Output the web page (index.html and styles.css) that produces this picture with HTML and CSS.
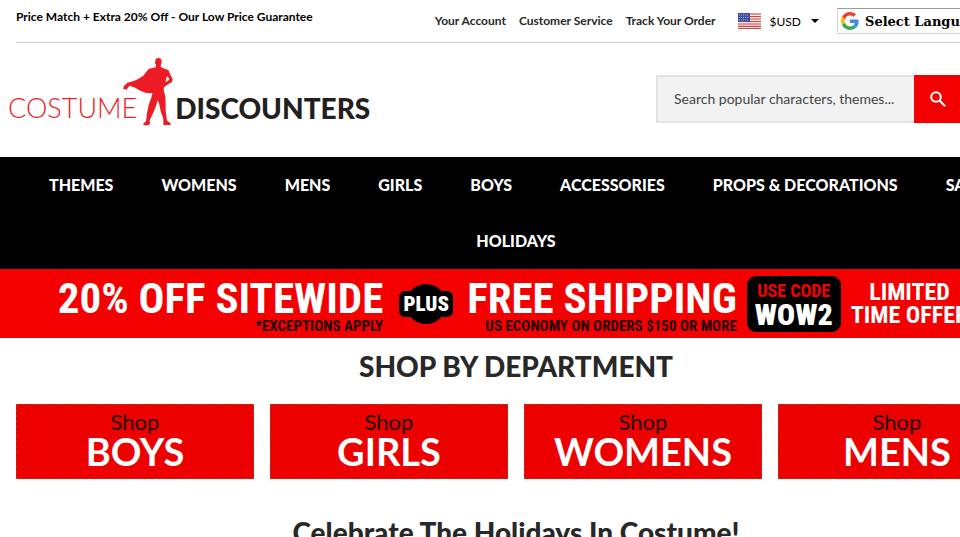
FILE: index.html
```html
<!DOCTYPE html>
<html lang="en">
<head>
<meta charset="utf-8">
<title>Costume Discounters</title>
<link rel="stylesheet" href="styles.css">
</head>
<body>
<header>
  <div class="topbar">
    <p class="promise">Price Match + Extra 20% Off - Our Low Price Guarantee</p>
    <div class="account">
      <a href="#">Your Account</a>
      <a href="#">Customer Service</a>
      <a href="#">Track Your Order</a>
    </div>
    <button class="currency" type="button">
      <svg class="flag" viewBox="0 0 23 16" aria-hidden="true">
        <rect width="23" height="16" fill="#f3e9e9"/>
        <path d="M0 1h23M0 3.500h23M0 6h23M0 8.500h23M0 11h23M0 13.300h23M0 15.500h23" stroke="#d5433f" stroke-width="1.200"/>
        <rect width="12" height="9" fill="#3f4e9c"/>
        <path d="M1 2h10M1 4.500h10M1 7h10" stroke="#a9b2da" stroke-dasharray="1 1"/>
      </svg>
      <span>$USD</span>
      <svg class="caret" viewBox="0 0 8 4" aria-hidden="true"><path d="M0 0h8L4 4z"/></svg>
    </button>
    <button class="language" type="button">
      <svg class="google" viewBox="0 0 48 48" aria-hidden="true">
        <path fill="#EA4335" d="M24 9.500c3.540 0 6.710 1.220 9.210 3.600l6.850-6.850C35.900 2.380 30.470 0 24 0 14.620 0 6.510 5.380 2.560 13.220l7.980 6.190C12.430 13.720 17.740 9.500 24 9.500z"/>
        <path fill="#4285F4" d="M46.980 24.550c0-1.570-.15-3.090-.38-4.550H24v9.020h12.940c-.58 2.960-2.260 5.480-4.780 7.180l7.730 6c4.510-4.180 7.090-10.360 7.090-17.650z"/>
        <path fill="#FBBC05" d="M10.530 28.590c-.48-1.450-.76-2.990-.76-4.590s.27-3.140.76-4.590l-7.980-6.190C.92 16.460 0 20.120 0 24s.92 7.540 2.560 10.780z"/>
        <path fill="#34A853" d="M24 48c6.480 0 11.930-2.130 15.890-5.810l-7.730-6c-2.150 1.450-4.920 2.300-8.160 2.300-6.260 0-11.570-4.220-13.470-9.910l-7.980 6.190C6.510 42.620 14.620 48 24 48z"/>
      </svg>
      <span>Select Language</span>
    </button>
  </div>

  <div class="masthead">
    <a class="logo" href="#" aria-label="Costume Discounters">
      <span class="logo-thin">COSTUME</span>
      <svg class="hero" viewBox="42 25 150 204" aria-hidden="true">
        <path fill-rule="evenodd" d="M140 28Q148 22 157 28L158 40 155 47 156 53 167 57 178 61 183 73 191 88 189 97 174 106 165 113 164 120 169 142 170 162 170 184 174 213 185 221 184 226 163 226 163 208 155 184 150 161 146 152 141 169 132 191 122 212 123 223 118 227 103 227 104 221 111 215 114 190 119 166 128 141 130 130Q116 133 103 127 90 122 79 114 70 111 62 108L52 120 42 117Q44 107 55 99L74 94Q91 87 103 78 112 65 120 57L140 53 141 47 138 41zM174 80L169 98 180 91 181 87z"/>
      </svg>
      <span class="logo-bold">DISCOUNTERS</span>
    </a>
    <form class="search">
      <input type="text" aria-label="Search" placeholder="Search popular characters, themes...">
      <button type="button" aria-label="Search">
        <svg viewBox="0 0 16 16" aria-hidden="true"><circle cx="6" cy="6" r="4.800"/><path d="M9.500 9.500L15.200 15.200"/></svg>
      </button>
    </form>
  </div>

  <nav class="menu">
    <a href="#">THEMES</a>
    <a href="#">WOMENS</a>
    <a href="#">MENS</a>
    <a href="#">GIRLS</a>
    <a href="#">BOYS</a>
    <a href="#">ACCESSORIES</a>
    <a href="#">PROPS &amp; DECORATIONS</a>
    <a href="#">SALE</a>
    <a href="#">HOLIDAYS</a>
  </nav>
</header>

<main>
  <a class="banner" href="#">
    <span class="offer"><strong>20% OFF SITEWIDE</strong><small>*EXCEPTIONS APPLY</small></span>
    <span class="plus">
      <svg viewBox="0 0 54 40" aria-hidden="true"><circle cx="27" cy="20" r="20"/><rect y="7" width="54" height="26" rx="6"/></svg>
      <b>PLUS</b>
    </span>
    <span class="offer"><strong>FREE SHIPPING</strong><small>US ECONOMY ON ORDERS $150 OR MORE</small></span>
    <span class="code"><span>USE CODE</span><b>WOW2</b></span>
    <span class="limited"><span>LIMITED</span><span>TIME OFFER</span></span>
  </a>

  <h1>SHOP BY DEPARTMENT</h1>
  <div class="departments">
    <a href="#"><span>Shop</span><b>BOYS</b></a>
    <a href="#"><span>Shop</span><b>GIRLS</b></a>
    <a href="#"><span>Shop</span><b>WOMENS</b></a>
    <a href="#"><span>Shop</span><b>MENS</b></a>
  </div>
  <h2>Celebrate The Holidays In Costume!</h2>
</main>
</body>
</html>
```
FILE: styles.css
```css
* { box-sizing: border-box; }

html { overflow: hidden; }

body {
  margin: 0;
  min-width: 1032px;
  background: #fff;
  color: #282828;
  font-family: Lato, "Liberation Sans", sans-serif;
  font-size: 12px;
}

a { color: inherit; text-decoration: none; }
button { margin: 0; padding: 0; border: 0; background: none; color: #000; font: inherit; }
svg { display: block; }

.topbar {
  display: flex;
  align-items: center;
  height: 43px;
  margin: 0 16px;
  border-bottom: 1px solid #ccc;
}
.promise {
  align-self: flex-start;
  margin: 8px auto 0 0;
  color: #000;
  font-weight: 700;
  line-height: 18px;
}
.account { display: flex; gap: 13px; font-weight: 700; line-height: 18px; }
.currency { display: flex; align-items: center; margin-left: 22px; }
.flag { width: 23px; height: 16px; margin-right: 9px; }
.caret { width: 8px; height: 4px; margin-left: 10px; }
.language {
  display: flex;
  align-items: center;
  gap: 6px;
  width: 179px;
  height: 26px;
  margin-left: 18px;
  padding-left: 3px;
  border: 1px solid #d5d5d5;
  border-top-color: #9b9b9b;
  font: 700 13px "DejaVu Serif", serif;
}
.google { width: 18px; height: 18px; }

.masthead {
  display: flex;
  justify-content: space-between;
  align-items: flex-start;
  height: 114px;
  padding: 15px 70px 0 8px;
}
.logo { display: flex; align-items: flex-end; line-height: 36px; }
.logo-thin { color: #ed1c24; font-size: 27px; font-weight: 300; }
.logo-bold { color: #231f20; font-size: 28px; font-weight: 900; }
.hero { width: 50px; height: 68px; margin: 0 2px 0 -14px; fill: #ed1c24; }

.search { display: flex; margin-top: 17px; }
.search input {
  width: 258px;
  height: 48px;
  padding: 0 0 2px 16px;
  border: 2px solid #e3e3e3;
  border-right: 0;
  border-radius: 0;
  background: #f2f2f2;
  color: #444;
  font: 14px Lato, sans-serif;
  appearance: none;
}
.search input::placeholder { color: #444; }
.search button {
  display: grid;
  place-items: center;
  width: 48px;
  height: 48px;
  background: #f50000;
}
.search svg { width: 16px; height: 16px; fill: none; stroke: #fff; stroke-width: 2; }

.menu {
  display: flex;
  flex-wrap: wrap;
  justify-content: center;
  background: #000;
  color: #fff;
  font-size: 16px;
  font-weight: 900;
  line-height: 56px;
}
.menu a { padding: 0 24px; }

.banner {
  display: flex;
  align-items: center;
  justify-content: center;
  height: 69px;
  padding-right: 6px;
  background: #f50000;
  color: #fff;
  font-family: "Roboto Condensed", Roboto, "Liberation Sans", sans-serif;
  font-weight: 700;
  white-space: nowrap;
}
.offer { display: flex; flex-direction: column; align-items: flex-end; padding-top: 2px; }
.offer strong { font-size: 43px; line-height: 42px; font-weight: 700; }
.offer small { color: #200; font-size: 15px; line-height: 14px; }
.plus { display: grid; place-items: center; margin: 0 14px 0 16px; }
.plus > * { grid-area: 1 / 1; }
.plus svg { width: 54px; height: 40px; }
.plus b { font-size: 21px; }
.code {
  display: flex;
  flex-direction: column;
  align-items: center;
  width: 94px;
  height: 56px;
  margin: 0 10px;
  padding-top: 4px;
  border-radius: 9px;
  background: #000;
}
.code span { color: #f50000; font-size: 18px; line-height: 22px; }
.code b { font-size: 30px; line-height: 26px; }
.limited { display: flex; flex-direction: column; align-items: center; font-size: 24px; line-height: 23px; }

h1, h2 { margin: 0; text-align: center; font-size: 28px; font-weight: 900; line-height: 36px; }
h1 { padding: 10px 0 20px; }
.departments {
  display: grid;
  grid-template-columns: repeat(4, 1fr);
  gap: 16px;
  padding: 0 16px;
}
.departments a {
  display: flex;
  flex-direction: column;
  align-items: center;
  height: 75px;
  padding-top: 4px;
  border: 1px dashed #b43020;
  background: #ec0000;
}
.departments span { color: #200; font-size: 22px; line-height: 26px; }
.departments b { color: #fff; font-size: 38px; line-height: 32px; }
h2 { padding-top: 35px; }
```
